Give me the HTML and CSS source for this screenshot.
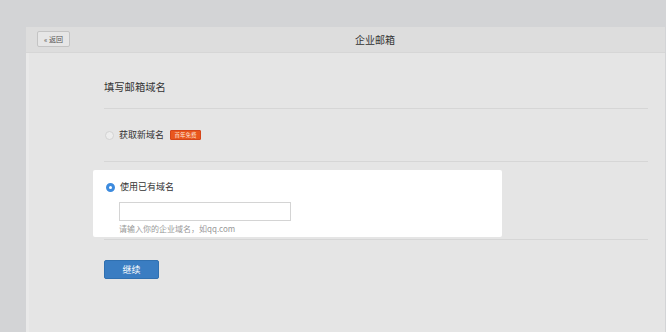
FILE: index.html
```html
<!DOCTYPE html>
<html lang="zh-CN">
<head>
<meta charset="utf-8">
<title>企业邮箱</title>
<link rel="stylesheet" href="styles.css">
</head>
<body>
<div class="panel">
  <div class="header">
    <button class="back">« 返回</button>
    <div class="title">企业邮箱</div>
  </div>
  <div class="content">
    <div class="heading">填写邮箱域名</div>
    <div class="option-row">
      <span class="radio"></span>
      <span class="label">获取新域名</span>
      <span class="badge">首年免费</span>
    </div>
    <div class="option-block">
      <div class="card">
        <div class="card-row">
          <span class="radio checked"></span>
          <span class="label">使用已有域名</span>
        </div>
        <input class="domain" type="text">
        <div class="hint">请输入你的企业域名，如qq.com</div>
      </div>
    </div>
    <button class="next">继续</button>
  </div>
</div>
</body>
</html>
```
FILE: styles.css
```css
html, body {
  margin: 0;
  padding: 0;
}
body {
  background: #d3d4d6;
  font-family: "Noto Sans CJK SC", "Noto Sans", sans-serif;
  color: #333;
  width: 666px;
  height: 332px;
  overflow: hidden;
}
.panel {
  margin: 27px 1px 0 26px;
  height: 305px;
  background: #e5e5e5;
  border-left: 3px solid #e9e9e9;
  box-sizing: border-box;
}
.header {
  height: 26px;
  background: #dddddd;
  border-bottom: 1px solid #d6d6d6;
  box-sizing: border-box;
  display: flex;
  align-items: flex-start;
  margin-left: -3px;
}
.back {
  margin: 4px 0 0 11px;
  width: 33px;
  height: 16px;
  padding: 0;
  border: 1px solid #c4c4c4;
  border-radius: 2px;
  background: #e6e6e6;
  font-family: inherit;
  font-size: 7px;
  line-height: 14px;
  color: #555;
}
.title {
  margin-left: 285px;
  font-size: 10px;
  line-height: 25px;
  color: #333;
}
.content {
  padding: 0 17px 0 75px;
}
.heading {
  padding: 27px 0 14px;
  font-size: 10.3px;
  line-height: 14px;
  border-bottom: 1px solid #d6d6d6;
  color: #333;
}
.option-row {
  height: 52px;
  display: flex;
  align-items: center;
  border-bottom: 1px solid #d6d6d6;
}
.radio {
  width: 9px;
  height: 9px;
  border-radius: 50%;
  box-sizing: border-box;
  border: 1px solid #d3d3d3;
  background: #ededed;
  margin-left: 1px;
  flex: none;
}
.radio.checked {
  border: 3px solid #3d8bde;
  background: #fff;
}
.label {
  margin-left: 5px;
  font-size: 9px;
  line-height: 12px;
  color: #333;
}
.badge {
  margin-left: 6px;
  width: 31px;
  height: 10px;
  box-sizing: border-box;
  background: #e9561d;
  border: 1px solid #d4461a;
  border-radius: 1px;
  color: #fde5da;
  font-size: 5.5px;
  line-height: 8px;
  text-align: center;
}
.option-block {
  height: 78px;
  padding-top: 8px;
  box-sizing: border-box;
  border-bottom: 1px solid #d6d6d6;
}
.card {
  margin-left: -11px;
  width: 409px;
  height: 67px;
  background: #fff;
  border-radius: 2px;
  box-sizing: border-box;
  padding: 11px 0 2px 12px;
}
.card-row {
  display: flex;
  align-items: center;
  height: 12px;
}
.card-row .label {
  margin-left: 5px;
}
.domain {
  display: block;
  margin: 9px 0 0 14px;
  width: 172px;
  height: 19px;
  box-sizing: border-box;
  border: 1px solid #d4d4d4;
  background: #fff;
  padding: 0;
  outline: none;
}
.hint {
  margin: 2px 0 0 14px;
  font-size: 8px;
  line-height: 12px;
  color: #999;
}
.next {
  display: block;
  margin: 20px 0 0 0;
  width: 55px;
  height: 19px;
  padding: 0;
  border: 1px solid #3070b0;
  border-radius: 2px;
  background: #3a7dc2;
  color: #fff;
  font-family: inherit;
  font-size: 9px;
  line-height: 17px;
}
```
